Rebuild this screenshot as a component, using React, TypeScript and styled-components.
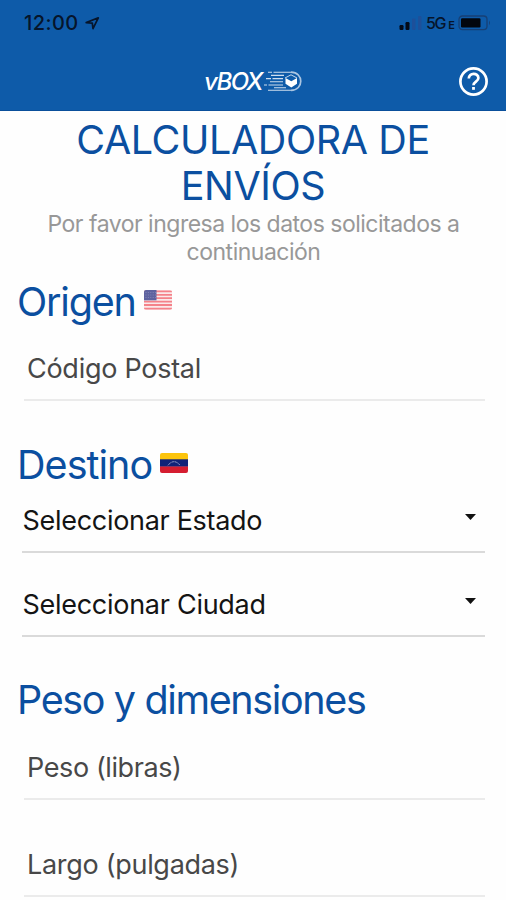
import React from "react";
import styled, { createGlobalStyle } from "styled-components";

const GlobalStyle = createGlobalStyle`
  * { box-sizing: border-box; }
  body { margin: 0; background: #fefefe; overflow: hidden; }
  body, button { font-family: Inter, "Liberation Sans", sans-serif; }
`;

const Screen = styled.div`
  width: 506px;
  height: 900px;
  overflow: hidden;
  background: #fefefe;
`;

const Header = styled.header`
  height: 111px;
  background: #0e5ba9;
  border-bottom: 1px solid #0a4f9b;
  display: flex;
  flex-direction: column;
`;

const StatusBar = styled.div`
  height: 46px;
  padding: 0 14px 0 24px;
  display: flex;
  align-items: center;
  justify-content: space-between;
  color: #06152b;
`;

const Clock = styled.div`
  display: flex;
  align-items: center;
  gap: 6px;
  font-size: 20px;
  line-height: 24px;
  font-weight: 500;
  letter-spacing: 0.4px;
`;

const Signals = styled.div`
  display: flex;
  align-items: center;
`;

const Network = styled.span`
  margin: 1px 3px 0 3px;
  font-size: 16px;
  line-height: 20px;
  font-weight: 500;
  letter-spacing: -1.2px;
`;

const NetworkSuffix = styled.span`
  margin-left: 3px;
  font-size: 11px;
  font-weight: 600;
  letter-spacing: 0;
`;

const NavBar = styled.nav`
  height: 64px;
  padding: 6px 17px 0 0;
  display: grid;
  grid-template-columns: 1fr auto 1fr;
  align-items: center;
`;

const Brand = styled.div`
  grid-column: 2;
  display: flex;
  align-items: center;
  margin-left: 18px;
  color: #fff;
`;

const BrandName = styled.span`
  padding-top: 2px;
  margin-right: 1px;
  font-size: 24px;
  line-height: 26px;
  font-weight: 500;
  font-style: italic;
  letter-spacing: -1.5px;
`;

const HelpButton = styled.button`
  grid-column: 3;
  justify-self: end;
  padding: 0;
  border: 0;
  background: none;
  display: flex;
`;

const Title = styled.h1`
  margin: 6px 0 0;
  font-size: 39.5px;
  line-height: 46px;
  font-weight: 400;
  letter-spacing: -0.4px;
  text-align: center;
  color: #0b4fa0;
`;

const Subtitle = styled.p`
  margin: 1px 0 0;
  padding-left: 1px;
  font-size: 23px;
  line-height: 28px;
  letter-spacing: -0.5px;
  text-align: center;
  color: #989898;
`;

const Section = styled.section<{ $top: number }>`
  margin-top: ${(p) => p.$top}px;
`;

const SectionTitle = styled.h2<{ $spacing?: number }>`
  margin: 0;
  padding-left: 17px;
  height: 46px;
  display: flex;
  align-items: center;
  gap: 8px;
  font-size: 39.5px;
  line-height: 46px;
  font-weight: 400;
  letter-spacing: ${(p) => p.$spacing ?? 0}px;
  color: #0b4fa0;
`;

const Flag = styled.svg`
  margin-bottom: 4px;
  display: block;
`;

const Field = styled.div<{ $height: number; $spacing?: number }>`
  margin: 0 21px 0 24px;
  padding: 0 0 13px 3px;
  height: ${(p) => p.$height}px;
  display: flex;
  align-items: flex-end;
  border-bottom: 2px solid #ebebeb;
  font-size: 27px;
  line-height: 34px;
  letter-spacing: ${(p) => p.$spacing ?? 0}px;
  color: #484848;
`;

const Select = styled(Field)`
  margin-left: 22px;
  padding: 0 9px 13px 0.5px;
  justify-content: space-between;
  border-bottom-color: #dadada;
  color: #141414;
`;

const Caret = styled.svg`
  display: block;
  margin-bottom: 18px;
`;

const LocationArrow = () => (
  <svg width="15" height="15" viewBox="0 0 15 15" fill="none" stroke="currentColor" strokeWidth="1.7" strokeLinejoin="round">
    <path d="M1.2 6.6 13.3 1.8 8 12.6 7.3 7.2Z" />
  </svg>
);

const SignalBars = () => (
  <svg width="24" height="16" viewBox="0 0 24 16">
    <rect x="0.5" y="10" width="4" height="5" rx="1.2" fill="#030a18" />
    <rect x="6.5" y="7" width="4" height="8" rx="1.2" fill="#030a18" />
    <rect x="13" y="3.5" width="3.5" height="11.5" rx="1" fill="#1d509a" />
    <rect x="19" y="1" width="3.5" height="14" rx="1" fill="#1d509a" />
  </svg>
);

const Battery = () => (
  <svg width="34" height="16" viewBox="0 0 34 16">
    <rect x="1" y="1" width="28" height="13.6" rx="3.4" fill="none" stroke="#174075" strokeWidth="1.3" />
    <rect x="3" y="3.2" width="19.5" height="9.2" rx="1.2" fill="#02060e" />
    <path d="M31 5.5q2 2.3 0 4.8z" fill="#174075" />
  </svg>
);

const BrandMark = () => (
  <svg width="40" height="24" viewBox="0 0 40 24" fill="none" stroke="#fff">
    <path d="M5 3.2H9M10.5 3.2H28M8 6.4H21M3 9.6H8M9.5 9.6H20M7 12.8H20M1 16H4M5.5 16H20M5 21.3H28M11 18.8H23" strokeWidth="1.1" opacity=".8" />
    <path d="M28 3.2c13 0 13 18.1 0 18.1" strokeWidth="1.7" opacity=".65" />
    <path d="M22 9 28 5.8 34 9" strokeWidth="1" opacity=".75" />
    <path d="M22.5 9 28.3 12.3 34 9V14.8L28.3 18.4 22.5 14.8Z" fill="#fff" stroke="none" />
  </svg>
);

const HelpIcon = () => (
  <svg width="31" height="31" viewBox="0 0 31 31" fill="none" stroke="#fff" strokeWidth="2.7">
    <circle cx="15.5" cy="15.5" r="13.1" />
    <path d="M10.8 12.6c0-6.4 9.6-6.2 9.6-.6 0 3.6-4.9 3.7-4.9 7.3" strokeWidth="2.7" />
    <path d="M15.5 21v2.8" strokeWidth="2.8" />
  </svg>
);

const UsaFlag = () => (
  <Flag width="28" height="20" viewBox="0 0 28 20">
    <clipPath id="usa"><rect width="28" height="20" rx="2" /></clipPath>
    <g clipPath="url(#usa)">
      <rect width="28" height="20" fill="#fbe9ea" />
      <path d="M0 1.4H28M0 4.8H28M0 8.2H28M0 11.6H28M0 15H28M0 18.6H28" stroke="#f4828a" strokeWidth="1.8" />
      <rect width="12.5" height="10.3" fill="#5e629f" />
      <path d="M1.5 2.5H12M1.5 5H12M1.5 7.5H12" stroke="#8b8dbb" strokeWidth=".8" strokeDasharray="1 1.4" />
    </g>
  </Flag>
);

const VenezuelaFlag = () => (
  <Flag width="28" height="20" viewBox="0 0 28 20">
    <clipPath id="ven"><rect width="28" height="20" rx="2" /></clipPath>
    <g clipPath="url(#ven)">
      <rect width="28" height="7" fill="#fcc40c" />
      <rect y="6.3" width="28" height="7.5" fill="#112278" />
      <rect y="13.5" width="28" height="6.5" fill="#d51d30" />
      <path d="M8 12.2Q14 5.2 20 12.2" fill="none" stroke="#c5cae6" strokeWidth="1" strokeDasharray="1 .6" />
    </g>
  </Flag>
);

const DownCaret = () => (
  <Caret width="11" height="6" viewBox="0 0 11 6">
    <path d="M0 0H11L5.5 6Z" fill="#111" />
  </Caret>
);

export default function App() {
  return (
    <Screen>
      <GlobalStyle />
      <Header>
        <StatusBar>
          <Clock>12:00 <LocationArrow /></Clock>
          <Signals>
            <SignalBars />
            <Network>5G<NetworkSuffix>E</NetworkSuffix></Network>
            <Battery />
          </Signals>
        </StatusBar>
        <NavBar>
          <Brand><BrandName>vBOX</BrandName><BrandMark /></Brand>
          <HelpButton aria-label="Ayuda"><HelpIcon /></HelpButton>
        </NavBar>
      </Header>
      <main>
        <Title>CALCULADORA DE<br />ENVÍOS</Title>
        <Subtitle>Por favor ingresa los datos solicitados a<br />continuación</Subtitle>
        <Section $top={13}>
          <SectionTitle $spacing={-1.2}>Origen <UsaFlag /></SectionTitle>
          <Field $height={76} $spacing={-0.27}>Código Postal</Field>
        </Section>
        <Section $top={41}>
          <SectionTitle $spacing={-0.95}>Destino <VenezuelaFlag /></SectionTitle>
          <Select $height={65} $spacing={-0.3}>Seleccionar Estado<DownCaret /></Select>
          <Select $height={84} $spacing={-0.28}>Seleccionar Ciudad<DownCaret /></Select>
        </Section>
        <Section $top={40}>
          <SectionTitle $spacing={-1.37}>Peso y dimensiones</SectionTitle>
          <Field $height={77} $spacing={-0.4}>Peso (libras)</Field>
          <Field $height={97} $spacing={-0.3}>Largo (pulgadas)</Field>
        </Section>
      </main>
    </Screen>
  );
}
